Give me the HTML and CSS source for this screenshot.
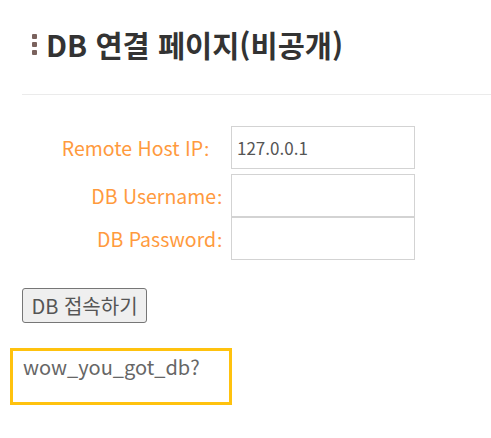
FILE: index.html
```html
<!DOCTYPE html>
<html lang="ko">
<head>
<meta charset="utf-8">
<title>DB 연결 페이지(비공개)</title>
<link rel="stylesheet" href="styles.css">
</head>
<body>
<div class="wrap">
  <h1 class="title">
    <span class="dots"><i></i><i></i><i></i></span>
    <span>DB 연결 페이지(비공개)</span>
  </h1>
  <hr class="rule">
  <form class="form">
    <div class="row row-first">
      <label class="label label-first">Remote Host IP<span class="colon">:</span></label>
      <input class="field" type="text" value="127.0.0.1">
    </div>
    <div class="row">
      <label class="label">DB Username<span class="colon">:</span></label>
      <input class="field" type="text">
    </div>
    <div class="row">
      <label class="label">DB Password<span class="colon">:</span></label>
      <input class="field" type="password">
    </div>
    <button class="btn" type="button">DB 접속하기</button>
  </form>
  <div class="result">wow_you_got_db?</div>
</div>
</body>
</html>
```

FILE: styles.css
```css
* { box-sizing: border-box; }
html, body { margin: 0; padding: 0; background: #fff; }
body {
  font-family: "Noto Sans CJK KR", "Noto Sans", sans-serif;
  color: #333;
}
.wrap { padding: 24px 0 0 10px; }
.title {
  margin: 0 0 0 22px;
  display: flex;
  align-items: center;
  gap: 9px;
  font-size: 29.5px;
  line-height: 40px;
  font-weight: 700;
  color: #333;
}
.dots { display: flex; flex-direction: column; gap: 3px; }
.dots i { display: block; width: 5px; height: 5px; background: #7a625d; border-radius: 1px; }
.rule {
  margin: 30px 0 0 12px;
  border: 0;
  border-top: 1px solid #ebebeb;
  height: 0;
}
.form { padding-top: 31px; }
.row {
  display: flex;
  align-items: center;
  height: 43px;
}
.row-first { margin-bottom: 5px; }
.label {
  width: 212px;
  text-align: right;
  font-size: 19.5px;
  color: #ff9a3d;
  padding-right: 0;
}
.colon { font-family: Lato, "Noto Sans", sans-serif; padding-left: 1px; }
.label-first { padding-right: 13px; }
.field {
  margin-left: 9px;
  width: 184px;
  height: 43px;
  border: 1px solid #d3d3d3;
  padding: 0 5px;
  font-family: "Noto Sans CJK KR", "Noto Sans", sans-serif;
  font-size: 17px;
  color: #555;
  outline: none;
}
.btn {
  display: block;
  margin: 28px 0 0 12px;
  width: 125px;
  height: 35px;
  padding: 0;
  border: 1px solid #767676;
  border-radius: 3px;
  background: #efefef;
  font-family: "Noto Sans CJK KR", "Noto Sans", sans-serif;
  font-size: 20px;
  color: #555;
}
.result {
  margin-top: 25px;
  width: 222px;
  height: 57px;
  border: 3px solid #ffc20e;
  padding: 2px 10px;
  font-size: 20px;
  line-height: 28px;
  color: #666;
}
```
